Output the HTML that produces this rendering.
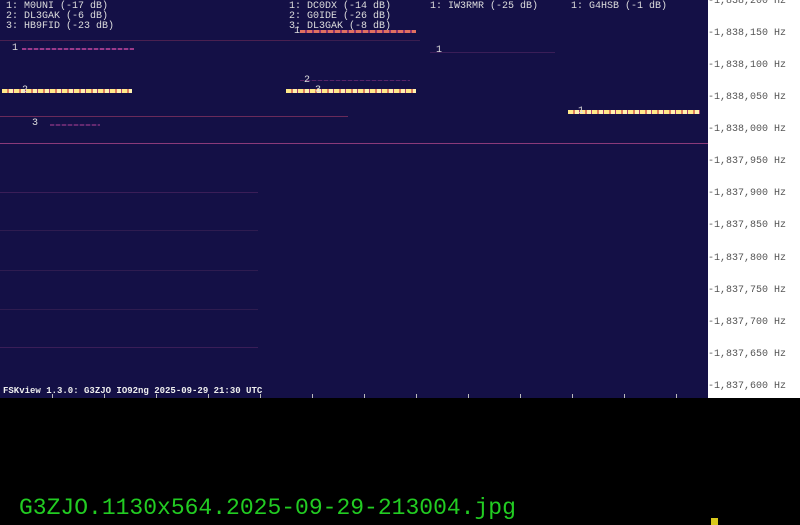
<!DOCTYPE html>
<html><head><meta charset="utf-8">
<style>
*{margin:0;padding:0;box-sizing:border-box}
html,body{width:800px;height:525px;background:#000;overflow:hidden;position:relative}
#spec{position:absolute;left:0;top:0;width:708px;height:398px;background:#141046}
#axis{position:absolute;left:708px;top:0;width:92px;height:398px;background:#fff}
.t{position:absolute;font-family:"Liberation Mono",monospace;font-size:10px;color:#ddd;white-space:pre;line-height:10px}
.ax{position:absolute;left:0;font-family:"Liberation Mono",monospace;font-size:10px;color:#555;white-space:pre;line-height:10px}
.ln{position:absolute;height:1px}
.sig{position:absolute;height:4px;background:repeating-linear-gradient(90deg,#ffe98a 0 5px,#e08060 5px 7px,#fff2b0 7px 11px,#b04070 11px 12px)}
.wk{position:absolute;height:2px;background:repeating-linear-gradient(90deg,#9a3a8a 0 4px,#3a1e60 4px 6px)}
.tick{position:absolute;bottom:0;width:1px;height:4px;background:#bbb}
</style></head><body>
<div id="spec">
  <div class="ln" style="left:0;top:143px;width:708px;background:#8a3a7a"></div>
  <div class="ln" style="left:0;top:40px;width:350px;background:#4a2050"></div>
  <div class="ln" style="left:0;top:116px;width:348px;background:#6a2a5a"></div>
  <div class="ln" style="left:0;top:192px;width:258px;background:#3a1e58"></div>
  <div class="ln" style="left:0;top:230px;width:258px;background:#2e1c50"></div>
  <div class="ln" style="left:0;top:270px;width:258px;background:#2e1c50"></div>
  <div class="ln" style="left:0;top:309px;width:258px;background:#2e1c50"></div>
  <div class="ln" style="left:0;top:347px;width:258px;background:#3a1e58"></div>
  <div class="ln" style="left:290px;top:40px;width:130px;background:#3a1e50"></div>
  <div class="ln" style="left:430px;top:52px;width:125px;background:#3a1e58"></div>

  <div class="wk" style="left:22px;top:48px;width:112px"></div>
  <div class="sig" style="left:2px;top:89px;width:130px"></div>
  <div class="wk" style="left:50px;top:124px;width:50px;opacity:.6"></div>
  <div class="wk" style="left:300px;top:30px;width:116px;height:3px;background:repeating-linear-gradient(90deg,#e07060 0 5px,#8a3070 5px 7px)"></div>
  <div class="sig" style="left:286px;top:89px;width:130px"></div>
  <div class="wk" style="left:300px;top:80px;width:110px;height:1px;opacity:.5"></div>
  <div class="sig" style="left:568px;top:110px;width:132px"></div>

  <div class="t" style="left:6px;top:2px">1: M0UNI (-17 dB)
2: DL3GAK (-6 dB)
3: HB9FID (-23 dB)</div>
  <div class="t" style="left:289px;top:2px">1: DC0DX (-14 dB)
2: G0IDE (-26 dB)
3: DL3GAK (-8 dB)</div>
  <div class="t" style="left:430px;top:2px">1: IW3RMR (-25 dB)</div>
  <div class="t" style="left:571px;top:2px">1: G4HSB (-1 dB)</div>
  <div class="t" style="left:12px;top:44px">1</div>
  <div class="t" style="left:22px;top:86px">2</div>
  <div class="t" style="left:32px;top:119px">3</div>
  <div class="t" style="left:294px;top:27px">1</div>
  <div class="t" style="left:304px;top:76px">2</div>
  <div class="t" style="left:315px;top:86px">3</div>
  <div class="t" style="left:436px;top:46px">1</div>
  <div class="t" style="left:578px;top:107px">1</div>
  <div class="t" style="left:3px;top:386px;font-size:9px;font-weight:bold;color:#eee">FSKview 1.3.0: G3ZJO IO92ng 2025-09-29 21:30 UTC</div>
  <div class="tick" style="left:52px"></div><div class="tick" style="left:104px"></div>
  <div class="tick" style="left:156px"></div><div class="tick" style="left:208px"></div>
  <div class="tick" style="left:260px"></div><div class="tick" style="left:312px"></div>
  <div class="tick" style="left:364px"></div><div class="tick" style="left:416px"></div>
  <div class="tick" style="left:468px"></div><div class="tick" style="left:520px"></div>
  <div class="tick" style="left:572px"></div><div class="tick" style="left:624px"></div>
  <div class="tick" style="left:676px"></div>
</div>
<div id="axis">
  <div class="ax" style="top:-3px">-1,838,200 Hz</div>
  <div class="ax" style="top:29px">-1,838,150 Hz</div>
  <div class="ax" style="top:61px">-1,838,100 Hz</div>
  <div class="ax" style="top:93px">-1,838,050 Hz</div>
  <div class="ax" style="top:125px">-1,838,000 Hz</div>
  <div class="ax" style="top:157px">-1,837,950 Hz</div>
  <div class="ax" style="top:189px">-1,837,900 Hz</div>
  <div class="ax" style="top:221px">-1,837,850 Hz</div>
  <div class="ax" style="top:254px">-1,837,800 Hz</div>
  <div class="ax" style="top:286px">-1,837,750 Hz</div>
  <div class="ax" style="top:318px">-1,837,700 Hz</div>
  <div class="ax" style="top:350px">-1,837,650 Hz</div>
  <div class="ax" style="top:382px">-1,837,600 Hz</div>
</div>
<div style="position:absolute;left:19px;top:495px;font-family:'Liberation Mono',monospace;font-size:23px;color:#22cc22;line-height:26px;white-space:pre">G3ZJO.1130x564.2025-09-29-213004.jpg</div>
<div style="position:absolute;left:711px;top:518px;width:7px;height:7px;background:#d8c81c"></div>
</body></html>
